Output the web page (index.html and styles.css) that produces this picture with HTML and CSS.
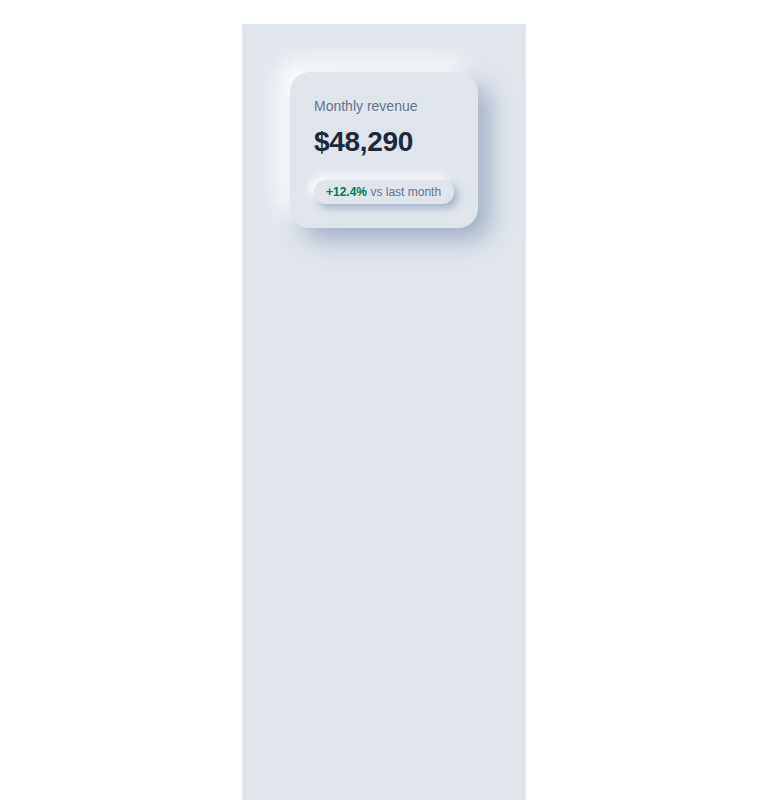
FILE: index.html
```html
<!DOCTYPE html>
<html lang="en">
<head>
<meta charset="utf-8">
<title>Monthly revenue</title>
<link rel="stylesheet" href="styles.css">
</head>
<body>
<main class="panel">
  <section class="card">
    <p class="label">Monthly revenue</p>
    <p class="value">$48,290</p>
    <div class="pill"><span class="delta">+12.4%</span> vs last month</div>
  </section>
</main>
</body>
</html>
```

FILE: styles.css
```css
html, body {
  margin: 0;
  padding: 0;
  background: #ffffff;
}
body {
  padding-top: 24px;
  font-family: "Liberation Sans", Arial, sans-serif;
}
.panel {
  width: 284px;
  min-height: 776px;
  margin: 0 auto;
  background: #e0e5ec;
  padding: 48px;
  box-sizing: border-box;
}
.card {
  width: 188px;
  box-sizing: border-box;
  padding: 24px;
  border-radius: 20px;
  background: #e0e5ec;
  box-shadow: 12px 12px 24px #a3b1c6, -12px -12px 24px #ffffff;
}
.label {
  margin: 0;
  font-size: 14px;
  line-height: 20px;
  color: #64748b;
}
.value {
  margin: 9px 0 0;
  font-size: 28px;
  line-height: 34px;
  font-weight: 700;
  letter-spacing: -0.3px;
  color: #1e293b;
}
.pill {
  display: inline-block;
  margin-top: 21px;
  padding: 4px 13px 4px 12px;
  font-size: 12px;
  line-height: 16px;
  color: #64748b;
  border-radius: 999px;
  background: #e0e5ec;
  box-shadow: 4px 4px 8px #a3b1c6, -4px -4px 8px #ffffff;
  white-space: nowrap;
}
.delta {
  color: #047857;
  font-weight: 700;
}
```
